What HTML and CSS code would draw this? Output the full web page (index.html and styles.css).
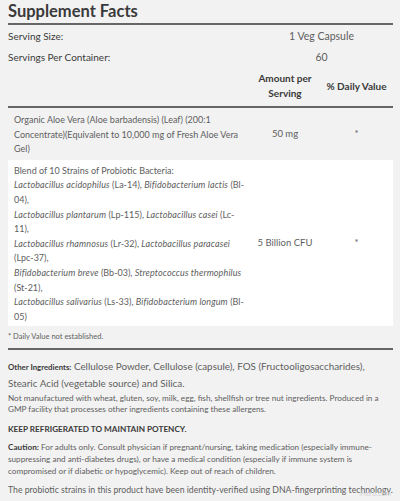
FILE: index.html
```html
<!DOCTYPE html>
<html lang="en">
<head>
  <meta charset="UTF-8" />
  <title>Supplement Facts</title>
  <link rel="stylesheet" href="styles.css">
</head>
<body>
  <div class="facts">
    <h2>Supplement Facts</h2>
    <table>
      <colgroup>
        <col class="c-name">
        <col class="c-amt">
        <col class="c-dv">
      </colgroup>
      <tr class="serving">
        <td class="name">Serving Size:</td>
        <td colspan="2" class="val">1 Veg Capsule</td>
      </tr>
      <tr class="serving">
        <td class="name">Servings Per Container:</td>
        <td colspan="2" class="val">60</td>
      </tr>
      <tr class="head">
        <th></th>
        <th class="amt">Amount per<br>Serving</th>
        <th class="dv">% Daily Value</th>
      </tr>
      <tr class="item">
        <td class="desc">Organic Aloe Vera (Aloe barbadensis) (Leaf) (200:1<br>Concentrate)(Equivalent to 10,000 mg of Fresh Aloe Vera<br>Gel)</td>
        <td class="amt">50 mg</td>
        <td class="dv">*</td>
      </tr>
      <tr class="item white">
        <td class="desc">Blend of 10 Strains of Probiotic Bacteria:<br><i>Lactobacillus acidophilus</i> (La-14), <i>Bifidobacterium lactis</i> (Bl-<br>04),<br><i>Lactobacillus plantarum</i> (Lp-115), <i>Lactobacillus casei</i> (Lc-<br>11),<br><i>Lactobacillus rhamnosus</i> (Lr-32), <i>Lactobacillus paracasei</i><br>(Lpc-37),<br><i>Bifidobacterium breve</i> (Bb-03), <i>Streptococcus thermophilus</i><br>(St-21),<br><i>Lactobacillus salivarius</i> (Ls-33), <i>Bifidobacterium longum</i> (Bl-<br>05)</td>
        <td class="amt">5 Billion CFU</td>
        <td class="dv">*</td>
      </tr>
    </table>
    <p class="note">* Daily Value not established.</p>
  </div>

  <div class="other">
    <p class="ingredients"><b>Other Ingredients:</b> Cellulose Powder, Cellulose (capsule), FOS (Fructooligosaccharides),<br>Stearic Acid (vegetable source) and Silica.</p>
    <p class="small allergens">Not manufactured with wheat, gluten, soy, milk, egg, fish, shellfish or tree nut ingredients. Produced in a<br>GMP facility that processes other ingredients containing these allergens.</p>
    <p class="small keep">KEEP REFRIGERATED TO MAINTAIN POTENCY.</p>
    <p class="small caution"><b>Caution:</b> For adults only. Consult physician if pregnant/nursing, taking medication (especially immune-<br>suppressing and anti-diabetes drugs), or have a medical condition (especially if immune system is<br>compromised or if diabetic or hypoglycemic). Keep out of reach of children.</p>
    <p class="small dna">The probiotic strains in this product have been identity-verified using DNA-fingerprinting technology.<span class="mark">iHerb.com</span></p>
  </div>
</body>
</html>
```

FILE: styles.css
```css
body {
  margin: 0;
  padding: 0 7px 0 8px;
  background-color: #f2f2f2;
  font-family: Lato, "Noto Sans", sans-serif;
  color: #5e5e5e;
  font-size: 9px;
}
h2 {
  margin: 0;
  padding: 2px 0 3px 0;
  font-size: 16.5px;
  line-height: 18px;
  font-weight: 700;
  color: #3a3a3a;
  border-bottom: 2px solid #666;
}
table {
  width: 100%;
  border-collapse: collapse;
  table-layout: fixed;
}
.c-amt {
  width: 70px;
}
.c-dv {
  width: 73px;
}
td, th {
  padding: 0;
  vertical-align: middle;
}
.serving td {
  height: 21px;
  font-size: 10px;
  color: #3a3a3a;
}
.serving .val {
  text-align: center;
  font-size: 10.5px;
  color: #5e5e5e;
}
.head th {
  font-size: 10px;
  font-weight: 700;
  color: #3a3a3a;
  line-height: 15px;
  padding: 4px 0 5px 0;
  border-bottom: 2px solid #666;
}
.item td {
  line-height: 14.6px;
  font-size: 9.5px;
  text-align: center;
}
.item .desc {
  font-size: 9px;
  text-align: left;
  white-space: nowrap;
  padding: 5px 6px 3px 6px;
}
.item i {
  letter-spacing: 0.12px;
}
.white td {
  background-color: #fff;
}
.white .desc {
  padding: 4px 6px 2px 6px;
}
.note {
  margin: 0;
  padding: 5px 0 6px 0;
  font-size: 7.5px;
  line-height: 11px;
  border-bottom: 2px solid #666;
}
.other {
  padding-top: 8px;
}
.other p {
  margin: 0;
  white-space: nowrap;
}
.ingredients {
  font-size: 9.9px;
  line-height: 16px;
}
.ingredients b {
  font-size: 7.8px;
  color: #3a3a3a;
}
.small {
  font-size: 8.2px;
  line-height: 11px;
}
.allergens {
  margin-top: 2px !important;
}
.keep {
  margin-top: 9px !important;
  font-size: 8.2px;
  color: #3a3a3a;
  font-weight: 700;
}
.caution {
  line-height: 12px;
  margin-top: 6px !important;
}
.caution b {
  color: #3a3a3a;
}
.dna {
  position: relative;
  font-size: 8.7px;
  line-height: 12px;
  margin-top: 7px !important;
}
.mark {
  position: absolute;
  right: 2px;
  top: 3px;
  font-size: 7px;
  color: #d2d2d2;
}
```
